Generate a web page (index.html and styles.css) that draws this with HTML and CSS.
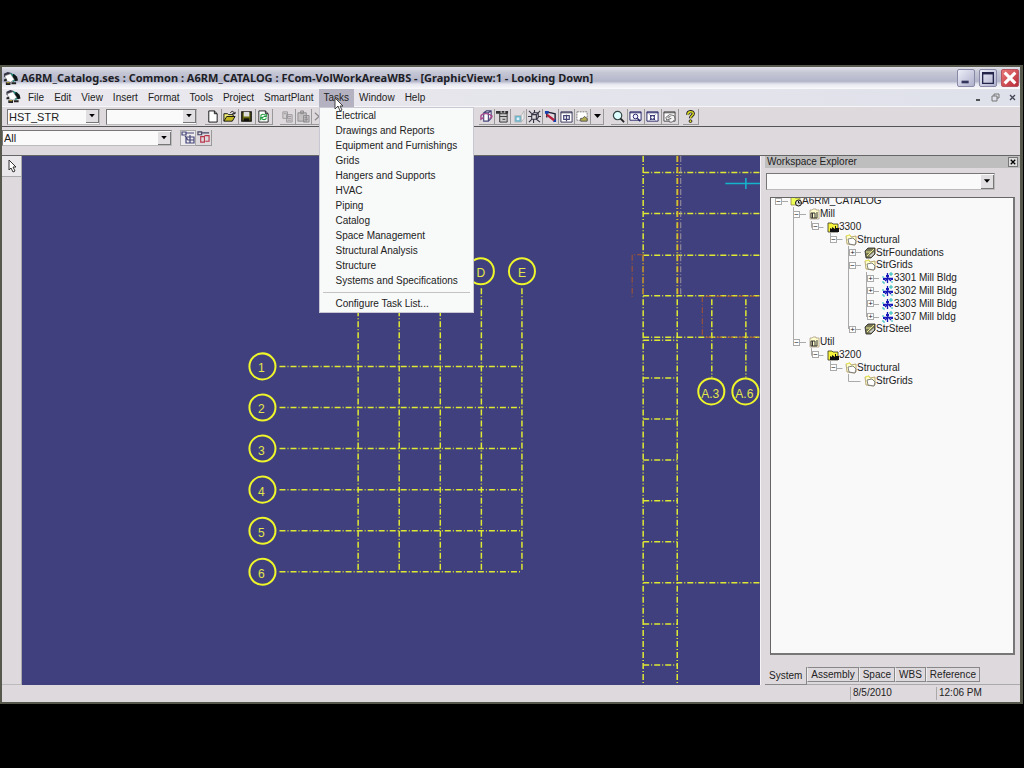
FILE: index.html
```html
<!DOCTYPE html>
<html lang="en">
<head>
<meta charset="utf-8">
<title>A6RM_Catalog.ses</title>
<link rel="stylesheet" href="styles.css">
</head>
<body>
<svg class="defs" aria-hidden="true">
  <symbol id="app" viewBox="0 0 16 16"><path d="M1 3l4-2 4 1 1 4-5 2-4-2z" fill="#334"/><path d="M8 2l5 2 2 4-4 4-4-5z" fill="#1c8a7c"/><path d="M11 3l4 3 1 4-3 1-3-5z" fill="#0c1414"/><path d="M2 5l6-2 4 6-4 3-5-2z" fill="#fff" stroke="#777" stroke-width=".6"/><path d="M1 9l3-1v3H1zM3 12h5v3H3zM9 12h5v2H9z" fill="#222"/><path d="M4 12h3v1H4z" fill="#ba3"/></symbol>
  <symbol id="down" viewBox="0 0 9 5"><path d="M1 0h7L4.500 4z" fill="#000"/></symbol>
  <symbol id="plant" viewBox="0 0 12 12"><path d="M1 2h3l1 1h5v7H1z" fill="#ef5" stroke="#874" stroke-width=".7"/><circle cx="8.500" cy="8" r="3" fill="#ddd" stroke="#111"/><path d="M8.500 6v2h2" stroke="#111" fill="none"/></symbol>
  <symbol id="unit" viewBox="0 0 12 12"><path d="M2 2h2l1-1h3v1h3v9H2z" fill="#ffc" stroke="#a98" stroke-width=".8"/><path d="M3 5h4v5H3zM9 4v6H7" fill="none" stroke="#333"/><path d="M4.500 5v5" stroke="#333"/></symbol>
  <symbol id="area" viewBox="0 0 12 12"><path d="M1 2h4l1 1h5v8H1z" fill="#f5f33c" stroke="#332" stroke-width=".8"/><path d="M3 11V7l2 1V6l3 2V5h1v2h3v4z" fill="#111"/></symbol>
  <symbol id="folder" viewBox="0 0 12 12"><path d="M1 2l4-1 1 2 5-1v8l-2 1-7-1z" fill="#ffc" stroke="#a9955a" stroke-width=".8"/><path d="M3 5l5-1 3 3-1 4-6-1z" fill="#fff" stroke="#666" stroke-width=".8"/><path d="M1 2l4-1 1 1" stroke="#ee5" fill="none"/></symbol>
  <symbol id="steel" viewBox="0 0 12 12"><path d="M1 4l3-3h7v6l-4 4H2z" fill="#775" stroke="#222" stroke-width=".8"/><path d="M2 5h5l3-3M7 5L3 9" stroke="#ee9" fill="none"/><path d="M5 9l5-4v2l-3 3z" fill="#ccc"/></symbol>
  <symbol id="grid" viewBox="0 0 12 12"><path d="M5.500 1v10M1 6.500h10M3 9l3-3 3 3" stroke="#1818b8" fill="none" stroke-width="1.300"/><path d="M7 2h4M9 0v4M1 4v2M1 9v2h2M10 9v2" stroke="#2bb" fill="none"/><path d="M4 3h3v2H4zM1 6h2v2H1zM9 6h2v2H9z" fill="#1818b8"/></symbol>
</svg>
<main class="window">
  <header class="titlebar">
    <svg class="app-icon"><use href="#app"/></svg>
    <h1>A6RM_Catalog.ses : Common : A6RM_CATALOG : FCom-VolWorkAreaWBS - [GraphicView:1 - Looking Down]</h1>
    <button class="win" aria-label="Minimize"><svg viewBox="0 0 18 18"><path d="M4 12h8v3H4z" fill="#34355c"/></svg></button>
    <button class="win" aria-label="Maximize"><svg viewBox="0 0 18 18"><path d="M3 3h12v12H3z" fill="none" stroke="#24254a" stroke-width="1.500"/><path d="M3 4h12" stroke="#24254a" stroke-width="2"/></svg></button>
    <button class="win close" aria-label="Close"><svg viewBox="0 0 18 18"><path d="M3 3l12 12M15 3L3 15" stroke="#fff" stroke-width="3.500"/></svg></button>
  </header>
  <nav class="menubar">
    <svg class="app-icon"><use href="#app"/></svg>
    <div class="menu"><button>File</button></div>
    <div class="menu"><button>Edit</button></div>
    <div class="menu"><button>View</button></div>
    <div class="menu"><button>Insert</button></div>
    <div class="menu"><button>Format</button></div>
    <div class="menu"><button>Tools</button></div>
    <div class="menu"><button>Project</button></div>
    <div class="menu"><button>SmartPlant</button></div>
    <div class="menu open"><button aria-expanded="true">Tasks</button>
      <div class="dropdown">
        <button>Electrical</button>
        <button>Drawings and Reports</button>
        <button>Equipment and Furnishings</button>
        <button>Grids</button>
        <button>Hangers and Supports</button>
        <button>HVAC</button>
        <button>Piping</button>
        <button>Catalog</button>
        <button>Space Management</button>
        <button>Structural Analysis</button>
        <button>Structure</button>
        <button>Systems and Specifications</button>
        <hr>
        <button>Configure Task List...</button>
      </div>
      <svg class="pointer" viewBox="0 0 10 16"><path d="M1 1v11l3-3 2 5 2-1-2-4h3z" fill="#fff" stroke="#333" stroke-width=".9"/></svg>
    </div>
    <div class="menu"><button>Window</button></div>
    <div class="menu"><button>Help</button></div>
    <div class="mdi">
      <button aria-label="Minimize view"><svg viewBox="0 0 9 9"><path d="M2 7h4" stroke="#222" stroke-width="1.500"/></svg></button>
      <button aria-label="Restore view"><svg viewBox="0 0 9 9"><path d="M3 3V1h5v4H6M1 3h5v5H1z" fill="none" stroke="#777"/></svg></button>
      <button aria-label="Close view"><svg viewBox="0 0 9 9"><path d="M2 2l5 5M7 2L2 7" stroke="#445" stroke-width="1.300"/></svg></button>
    </div>
  </nav>
  <div class="toolbar">
    <div class="combo style"><select aria-label="Style"><option>HST_STR</option></select><svg><use href="#down"/></svg></div>
    <div class="combo blank"><select aria-label="Type"><option></option></select><svg><use href="#down"/></svg></div>
    <div class="tools files">
      <button aria-label="New"><svg viewBox="0 0 14 14"><path d="M3 1h6l3 3v9H3zM9 1v3h3" fill="#fff" stroke="#111"/></svg></button>
      <button aria-label="Open"><svg viewBox="0 0 14 14"><path d="M1 12V4h4l1 1h5v3" fill="#ee7" stroke="#111"/><path d="M1 12l3-5h9l-3 5z" fill="#c3b820" stroke="#111"/><path d="M8 3c2-3 4-1 4 1M10 4h3V2" fill="none" stroke="#111"/></svg></button>
      <button aria-label="Save"><svg viewBox="0 0 14 14"><path d="M2 2h10v10H2z" fill="#6c6c10" stroke="#111" stroke-width="1.500"/><path d="M4 2h6v5H4z" fill="#ddd"/><path d="M4 9h6v3H4z" fill="#111"/></svg></button>
      <button aria-label="Refresh"><svg viewBox="0 0 14 14"><path d="M2 1h7l3 3v9H2zM9 1v3h3" fill="#fff" stroke="#222"/><path d="M4 7c0-3 4-3 5-1M10 4v3H7M10 8c0 3-4 3-5 1M4 11V8h3" fill="none" stroke="#1c9c3c" stroke-width="1.200"/></svg></button>
    </div>
    <div class="tools edit">
      <button aria-label="Copy"><svg viewBox="0 0 14 14"><path d="M2 2h5v7H2zM6 5h6v8H6zM7 7h4M7 9h4M7 11h4M3 4h3" fill="#d4d0d2" stroke="#9a979a"/></svg></button>
      <button aria-label="Paste"><svg viewBox="0 0 14 14"><path d="M1 3h9v9H1zM4 1h3v3H4zM7 6h6v7H7zM8 8h3M8 10h4" fill="#c4c0c2" stroke="#8d8a8d"/></svg></button>
      <button aria-label="Delete"><svg viewBox="0 0 14 14"><path d="M2 3l9 8M11 3L2 11" stroke="#8d8a8d" stroke-width="1.300"/></svg></button>
    </div>
    <div class="tools views">
      <button aria-label="Rotate view"><svg viewBox="0 0 14 14"><path d="M4 3l3-2h5v8l-3 3H4zM4 3h5l3-2M9 3v9" fill="#fff" stroke="#447" stroke-width="1.200"/><path d="M1 6c2-3 9-3 12 1M1 6v4l3-2M10 9c2 0 3-1 3-3" stroke="#a3488c" fill="none" stroke-width="1.500"/></svg></button>
      <button aria-label="Named views"><svg viewBox="0 0 14 14"><path d="M4 4h8v9H4zM4 7h8M7 10h3" fill="#ccc" stroke="#333"/><path d="M0 1h5v3H0zM6 1h3v2H6zM10 1h3v3h-3z" fill="#333"/></svg></button>
      <button aria-label="Surface style"><svg viewBox="0 0 14 14"><path d="M3 6h7v7H3z" fill="#64b4cd" stroke="#bbb"/><path d="M5 8h3v3H5z" fill="#e0f2f7"/><path d="M10 6l3-5v8l-3 4z" fill="#eef0f4" stroke="#aaa" stroke-width=".8"/></svg></button>
      <button aria-label="Fit view"><svg viewBox="0 0 14 14"><path d="M4 5h5v5H4zM4 5l2-2h5v5l-2 2M9 5l2-2M1 1l3 3M13 1l-2 2M1 13l3-3M13 13l-4-3M7 0v3M0 7h4M11 7h3M6 10v4" fill="none" stroke="#334" stroke-width="1.200"/></svg></button>
      <button aria-label="Clip"><svg viewBox="0 0 14 14"><path d="M3 2v6M3 2l9 2v7" stroke="#223" fill="none" stroke-width="1.500"/><path d="M1 1h4v3H1zM10 10h3v3h-3z" fill="#1540b0"/><path d="M3 5l8 6" stroke="#b52040" stroke-width="2.500"/></svg></button>
      <button aria-label="View by points"><svg viewBox="0 0 14 14"><path d="M1 2h12v11H1zM1 3h12" fill="#fff" stroke="#335"/><path d="M4 6h6v4H4zM7 5v7" fill="none" stroke="#447" stroke-width="1.300"/></svg></button>
      <button aria-label="Select region"><svg viewBox="0 0 14 14"><path d="M1 2h11v9H1z" fill="#fff" stroke="#777" stroke-dasharray="2 1"/><path d="M5 11V9h2l2-2 3 2v3H5z" fill="#b4ae50" stroke="#555"/></svg></button>
      <button class="arrow" aria-label="More regions"><svg><use href="#down"/></svg></button>
    </div>
    <div class="tools zooms">
      <button aria-label="Zoom"><svg viewBox="0 0 14 14"><circle cx="6" cy="6" r="4.500" fill="#dff" stroke="#344" stroke-width="1.300"/><path d="M9 9l4 4" stroke="#222" stroke-width="2"/></svg></button>
      <button aria-label="Zoom area"><svg viewBox="0 0 14 14"><path d="M1 2h12v9H1zM1 3h12" fill="#fff" stroke="#226"/><circle cx="7" cy="7" r="2.500" fill="#eef" stroke="#226"/><path d="M9 9l3 3" stroke="#226" stroke-width="1.500"/></svg></button>
      <button aria-label="Fit"><svg viewBox="0 0 14 14"><path d="M1 2h12v10H1zM1 3h12" fill="#fff" stroke="#226"/><path d="M4 5l2 2M10 5L8 7M4 11l2-2M10 11L8 9" stroke="#226"/><path d="M5 6h4v4H5z" fill="none" stroke="#226"/></svg></button>
      <button aria-label="Pan view"><svg viewBox="0 0 14 14"><path d="M1 2h12v10H1zM1 3h12" fill="#fff" stroke="#444"/><path d="M3 8l4-3 5 1 1 4-3 3H7l-1-3-2 1z" stroke="#666" fill="#f4f4f4"/><path d="M5 8l3-1M6 10l3-1" stroke="#555"/></svg></button>
    </div>
    <div class="tools"><button aria-label="Help"><svg viewBox="0 0 14 14"><path d="M4 5c0-4 6-4 6-1 0 2-3 2-3 5" fill="none" stroke="#222" stroke-width="3.500"/><path d="M4 5c0-4 6-4 6-1 0 2-3 2-3 5" fill="none" stroke="#dd2" stroke-width="1.500"/><circle cx="7" cy="12" r="1.500" fill="#dd2" stroke="#222"/></svg></button></div>
  </div>
  <div class="ribbon">
    <div class="combo filter"><select aria-label="Filter"><option>All</option></select><svg><use href="#down"/></svg></div>
    <button class="pressed" aria-label="Inside fence"><svg viewBox="0 0 14 14"><path d="M1 1h4v3H1zM5 2h8M5 6h8v6H5zM9 4v8M4 5l3 4h6" fill="none" stroke="#447" stroke-width="1.200"/></svg></button>
    <button aria-label="Overlapping fence"><svg viewBox="0 0 14 14"><path d="M1 1h4v3H1zM5 2h8" fill="none" stroke="#446" stroke-width="1.200"/><path d="M4 6h4v6H4zM8 5h5v6H9" fill="none" stroke="#b8354a" stroke-width="1.200"/></svg></button>
  </div>
  <div class="work">
    <aside class="select-strip"><button aria-label="Select"><svg viewBox="0 0 10 14"><path d="M2 1v10l2-2 2 4 2-1-2-4h3z" fill="#fff" stroke="#333"/></svg></button></aside>
    <svg class="canvas" viewBox="22 156 738 528" preserveAspectRatio="xMinYMin slice" role="img" aria-label="Grid drawing">
      <g class="cad">
        <path d="M279 366h242M279 407h242M279 448h242M279 489h242M279 530h242M279 571h242"/>
        <path d="M357.500 288v282M398.500 288v282M439.500 288v282M480.500 288v282M521 288v282"/>
        <path d="M642 156v528M676 156v528"/>
        <path d="M642 172.500h118M642 213.500h118M642 255h118M642 295.500h118M642 337h118M642 582h118"/>
        <path d="M642 340h34M642 377.500h34M642 418.500h34M642 459.500h34M642 500h34M642 541h34M642 623h34M642 664h34"/>
        <path d="M710.500 299v78M744.500 299v78"/>
      </g>
      <path class="cad pale" d="M679.500 156v140"/>
      <path class="cad rust" d="M677 156v140M642 254.500h-11v42M642 255v41M701 296v41M704 296h56M704 337h56"/>
      <path d="M724 183.500h36M744.500 178v11" stroke="#14b4cc" stroke-width="1.500"/>
      <g class="bubbles">
        <circle cx="262" cy="366" r="13"/><circle cx="262" cy="407" r="13"/><circle cx="262" cy="448" r="13"/><circle cx="262" cy="489" r="13"/><circle cx="262" cy="530" r="13"/><circle cx="262" cy="571" r="13"/>
        <circle cx="480" cy="271" r="13"/><circle cx="521" cy="271" r="13"/><circle cx="710" cy="391" r="13"/><circle cx="744" cy="391" r="13"/>
      </g>
      <g class="marks">
        <text x="261" y="372">1</text><text x="261" y="413">2</text><text x="261" y="454">3</text><text x="261" y="495">4</text><text x="261" y="536">5</text><text x="261" y="577">6</text>
        <text x="480" y="277">D</text><text x="521" y="277">E</text><text x="709" y="398">A.3</text><text x="743" y="398">A.6</text>
      </g>
    </svg>
    <aside class="explorer">
      <div class="explorer-head"><h2>Workspace Explorer</h2><button aria-label="Close explorer"><svg viewBox="0 0 9 9"><path d="M2 2l5 5M7 2L2 7" stroke="#000" stroke-width="1.500"/></svg></button></div>
      <div class="combo find"><select aria-label="Workspace filter"><option></option></select><svg><use href="#down"/></svg></div>
      <div class="tree-box">
        <div class="tree">
          <svg class="lines" viewBox="0 0 120 195"><path d="M5 6.500h13M23.500 12v135M24 19.500h12M24 147.500h12M41.500 26v6.500h12M60.500 38v6.500h12M41.500 153v7.500h12M60.500 166v7.500h12M78.500 51v83M79 57.500h12M79 70.500h12M79 134.500h12M96.500 77v45M97 83.500h12M97 96.500h12M97 109.500h12M97 122.500h12M78.500 179v7.500h12"/></svg>
          <div class="node d0"><button aria-label="Collapse">−</button><svg><use href="#plant"/></svg><span>A6RM_CATALOG</span></div>
          <div class="node d1"><button aria-label="Collapse">−</button><svg><use href="#unit"/></svg><span>Mill</span></div>
          <div class="node d2"><button aria-label="Collapse">−</button><svg><use href="#area"/></svg><span>3300</span></div>
          <div class="node d3"><button aria-label="Collapse">−</button><svg><use href="#folder"/></svg><span>Structural</span></div>
          <div class="node d4"><button aria-label="Expand">+</button><svg><use href="#steel"/></svg><span>StrFoundations</span></div>
          <div class="node d4"><button aria-label="Collapse">−</button><svg><use href="#folder"/></svg><span>StrGrids</span></div>
          <div class="node d5"><button aria-label="Expand">+</button><svg><use href="#grid"/></svg><span>3301 Mill Bldg</span></div>
          <div class="node d5"><button aria-label="Expand">+</button><svg><use href="#grid"/></svg><span>3302 Mill Bldg</span></div>
          <div class="node d5"><button aria-label="Expand">+</button><svg><use href="#grid"/></svg><span>3303 Mill Bldg</span></div>
          <div class="node d5"><button aria-label="Expand">+</button><svg><use href="#grid"/></svg><span>3307 Mill bldg</span></div>
          <div class="node d4"><button aria-label="Expand">+</button><svg><use href="#steel"/></svg><span>StrSteel</span></div>
          <div class="node d1"><button aria-label="Collapse">−</button><svg><use href="#unit"/></svg><span>Util</span></div>
          <div class="node d2"><button aria-label="Collapse">−</button><svg><use href="#area"/></svg><span>3200</span></div>
          <div class="node d3"><button aria-label="Collapse">−</button><svg><use href="#folder"/></svg><span>Structural</span></div>
          <div class="node d4 leaf"><svg><use href="#folder"/></svg><span>StrGrids</span></div>
        </div>
      </div>
      <div class="tabs"><button class="active">System</button><button>Assembly</button><button>Space</button><button>WBS</button><button>Reference</button></div>
    </aside>
  </div>
  <footer class="status"><span class="date">8/5/2010</span><span class="time">12:06 PM</span></footer>
</main>
</body>
</html>
```

FILE: styles.css
```css
* { box-sizing: border-box; }
body {
  margin: 0;
  height: 100vh;
  padding: 65px 1px 64px 0;
  background: #000;
  color: #222;
  font: 10px/12px "Liberation Sans", Arial, sans-serif;
}
button { margin: 0; padding: 0; border: 0; background: none; color: inherit; font: inherit; }
button svg { display: block; }
.defs { position: absolute; width: 0; height: 0; }

.window {
  display: flex;
  flex-direction: column;
  height: 100%;
  border: 2px solid #55584a;
  border-right-width: 3px;
  background: #ded9dd;
}

.titlebar {
  display: flex;
  flex: none;
  align-items: center;
  gap: 2px;
  height: 22px;
  padding: 0 1px 0 1px;
  background: linear-gradient(#dfe0e8, #c6c7d5 25%, #b3b5ca 65%, #e6e7ef 78%, #fafafc);
}
.titlebar h1 {
  flex: 1;
  margin: 0 0 0 1px;
  font: bold 11px/16px "Noto Sans", "Open Sans", sans-serif;
  white-space: nowrap;
  overflow: hidden;
  color: #1d1e26;
}
.app-icon { flex: none; width: 15px; height: 15px; }
.win {
  width: 18px;
  height: 18px;
  margin-left: 2px;
  border: 1px solid #888aa8;
  border-radius: 2px;
  background: linear-gradient(135deg, #eeeef8, #aeb0cc);
}
.win.close { border-color: #b45560; background: linear-gradient(135deg, #e87878, #b92b38); }

.menubar {
  display: flex;
  flex: none;
  height: 18px;
  padding: 0 3px;
  background: linear-gradient(90deg, #ebe9ee, #dfe1ea);
  border-bottom: 1px solid #f6f6f8;
}
.menubar > .app-icon { margin-right: 2px; width: 16px; }
.menu { position: relative; }
.menu > button { height: 18px; padding: 0 5px; }
.menu.open > button { background: #b4b2c1; }
.dropdown {
  position: absolute;
  z-index: 3;
  top: 18px;
  left: 0;
  width: 155px;
  padding: 0 1px 1px;
  border: 1px solid #c9c8d2;
  background: #f8f9f9;
}
.dropdown button { display: block; width: 100%; height: 15px; padding-left: 15px; text-align: left; }
.dropdown hr { margin: 4px 2px 3px; border: 0; border-top: 1px solid #c4c2c4; }
.pointer { position: absolute; z-index: 4; left: 15px; top: 8px; width: 10px; height: 16px; }
.mdi { display: flex; gap: 8px; align-items: center; margin-left: auto; }
.mdi svg { width: 9px; height: 9px; }

.toolbar {
  display: flex;
  flex: none;
  align-items: center;
  height: 20px;
  padding-left: 5px;
  border-bottom: 1px solid #555;
}
.combo {
  display: flex;
  align-items: center;
  height: 16px;
  border: 1px solid #777;
  border-right-color: #bbb;
  border-bottom-color: #bbb;
  background: #fafafa;
}
.combo select {
  flex: 1;
  min-width: 0;
  height: 100%;
  margin: 0;
  padding: 0 1px;
  border: 0;
  background: none;
  appearance: none;
  color: #222;
  font: 11px/14px "Liberation Sans", Arial, sans-serif;
}
.combo svg { flex: none; width: 13px; height: 13px; padding: 4px 2px; background: #e2dfe2; border-right: 1px solid #777; border-bottom: 1px solid #777; }
.style { width: 93px; }
.blank { width: 91px; margin: 0 8px 0 6px; }
.tools { display: flex; }
.tools button { width: 16px; height: 16px; padding: 1px; border-right: 1px solid #999; border-bottom: 1px solid #999; }
.tools svg { width: 13px; height: 13px; }
.files button { width: 17px; }
.files { margin-right: 7px; }
.edit { width: 199px; }
.views .arrow { width: 13px; }
.views .arrow svg { width: 9px; height: 5px; margin-left: 1px; }
.views { margin-right: 7px; }
.zooms { margin-right: 4px; }
.zooms button { width: 17px; }

.ribbon { display: flex; flex: none; align-items: flex-start; height: 29px; padding-top: 3px; border-bottom: 1px solid #666; }
.ribbon .filter { width: 170px; margin-right: 8px; }
.ribbon button { width: 16px; height: 16px; padding: 1px; border-right: 1px solid #999; border-bottom: 1px solid #999; }
.ribbon button.pressed { border: 1px solid #aaa; background: #eeecef; padding: 0; }

.work { display: flex; flex: 1; min-height: 0; }
.select-strip { flex: none; width: 20px; border-right: 1px solid #aaa; border-bottom: 1px solid #bbb; }
.select-strip button { width: 100%; height: 21px; padding: 3px 5px; border-bottom: 1px solid #aaa; background: #ebe8eb; }
.select-strip svg { width: 10px; height: 14px; }
.canvas { flex: 1; min-width: 0; height: 100%; background: #3f407d; }
.cad { fill: none; stroke: #dfe832; stroke-width: 1.500px; stroke-dasharray: 6 2 1 2; }
.cad.pale { stroke: #9f97a0; stroke-width: 1px; }
.cad.rust { stroke: #a8552f; stroke-width: 1px; }
.bubbles { fill: none; stroke: #eef52a; stroke-width: 2px; }
.marks { fill: #e3e64a; font: 12px "Liberation Sans", Arial, sans-serif; text-anchor: middle; }

.explorer { display: flex; flex: none; flex-direction: column; width: 260px; padding-left: 4px; border-left: 1px solid #f5f3f6; }
.explorer-head { display: flex; flex: none; align-items: center; justify-content: space-between; height: 12px; padding: 0 2px; background: #bfbebf; }
.explorer-head h2 { margin: 0; font: inherit; }
.explorer-head button { width: 10px; height: 10px; border: 1px solid #777; background: #ddd; }
.find { flex: none; width: 229px; height: 17px; margin: 5px 0 7px 1px; }
.find svg { height: 14px; }
.tree-box { flex: 1; min-height: 0; margin: 0 5px 12px; padding: 0 4px; overflow: hidden; border: 1px solid #666; border-right: 2px solid #777; border-bottom: 2px solid #777; background: #f9f9f9; }
.tree { position: relative; display: grid; grid-template-rows: repeat(15, 1fr); height: 192px; margin-top: -3px; }
.lines { position: absolute; left: -5px; top: 0; width: 120px; height: 195px; fill: none; stroke: #aaa; }
.node { position: relative; display: flex; align-items: center; min-height: 0; white-space: nowrap; }
.node button { width: 7px; height: 7px; margin-right: 8px; border: 1px solid #aaa; background: #fff; font: 8px/5px "Liberation Sans", Arial, sans-serif; }
.node svg { width: 12px; height: 12px; margin-right: 0; }
.d0 { padding-left: 0; }
.d1 { padding-left: 18px; }
.d2 { padding-left: 37px; }
.d3 { padding-left: 55px; }
.d4 { padding-left: 74px; }
.d5 { padding-left: 92px; }
.leaf { padding-left: 89px; }
.tabs { display: flex; flex: none; height: 18px; border-bottom: 1px solid #aaa; }
.tabs button { height: 15px; padding: 0 3px; border: 1px solid #888; border-left-color: #eee; }
.tabs .active { height: 18px; padding: 0 4px; border: 0; border-right: 1px solid #888; border-bottom: 1px solid #888; }

.status { display: flex; flex: none; justify-content: flex-end; align-items: center; height: 17px; }
.status span { height: 13px; padding-left: 2px; border-left: 1px solid #aaa; }
.date { width: 86px; }
.time { width: 84px; }
```
